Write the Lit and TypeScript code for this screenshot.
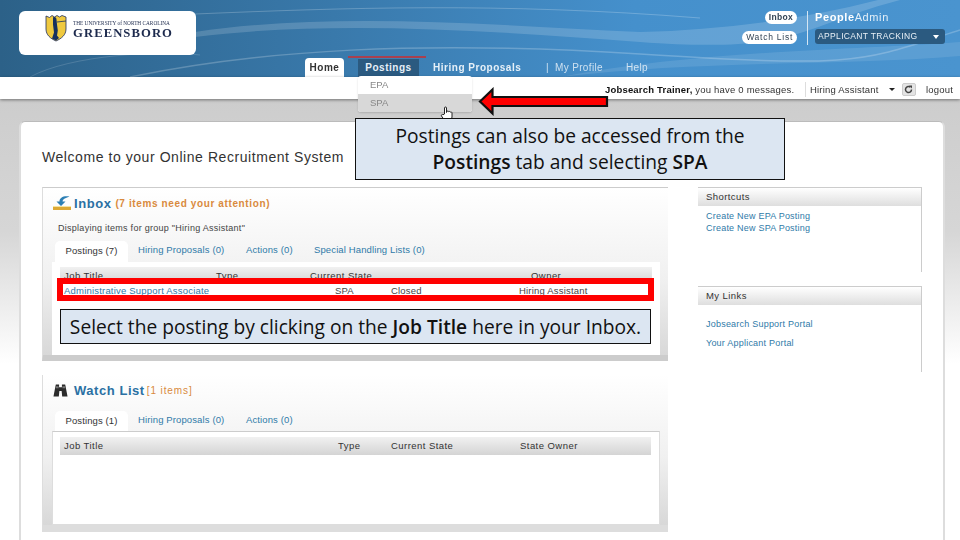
import { LitElement, html, css, svg } from "lit";
import { customElement } from "lit/decorators.js";

const inboxIcon = svg`<svg class="ico i1" width="20" height="16" viewBox="0 0 20 16"><path d="M1 11h18v4H1z" fill="#dca934"/><path d="M1 11.500h18" stroke="#f6e3a0" stroke-width="1"/><path d="M17.500 1.500C11.500.5 7.500 2.500 7.500 6.500H4.500L9 11l4.500-4.500h-3C10.500 4.500 13 3 17.500 1.500z" fill="#2c7fb4"/></svg>`;
const binoculars = svg`<svg class="ico i2" width="15" height="15" viewBox="0 0 16 15"><path d="M3 1h3.500v3H9.500V1H13l.8 4 1.700 9H9.800L9.200 8H6.800L6.200 14H.5l1.700-9z" fill="#2b2b2b"/><path d="M3 3h3v2H3zM10 3h3v2h-3z" fill="#777"/></svg>`;
const crest = svg`<svg width="22" height="27" viewBox="0 0 22 27"><path d="M1 1l3.500 1.500L7 .5 9.500 2 12 .5 14.500 2 17 .5l4 1.500v12c0 6-4.500 9.500-10 12C5.500 23.500 1 20 1 14z" fill="#efc93f" stroke="#1e2f5e" stroke-width=".8"/><path d="M8 2.500c2-1 3.500 0 3.500 2l.5 5 .8 6-.8 5 2 2.500-3 2.500-4-2 2-6-1-8z" fill="#16305f"/><path d="M12 7l9-1" stroke="#16305f" stroke-width=".8"/></svg>`;
const hand = svg`<svg width="14" height="16" viewBox="0 0 14 16"><path d="M4.500 8V2a1 1 0 0 1 2 0v4.500l.5-1a1 1 0 0 1 1.800.3 1 1 0 0 1 1.700.4 1 1 0 0 1 1.500.6V11l-1 4H5L1.500 10c-.6-1 .6-2 1.500-1.200z" fill="#fff" stroke="#222" stroke-width="1"/></svg>`;
const refresh = svg`<svg width="9" height="9" viewBox="0 0 9 9"><path d="M7.500 4.500a3 3 0 1 1-1-2.200" fill="none" stroke="#444" stroke-width="1.500"/><path d="M5 .5h3v3z" fill="#444"/></svg>`;
const swoosh = svg`<svg class="swoosh" width="960" height="77" viewBox="0 0 960 77" preserveAspectRatio="none">
<path d="M195 37C330 20 480 30 640 42S800 26 900 0h-22C800 20 720 30 640 32 480 24 330 12 195 32z" fill="#fff" opacity=".16"/>
<path d="M195 14C340 8 500 2 700 18" stroke="#fff" stroke-opacity=".22" fill="none"/>
<path d="M130 77C260 50 420 40 640 54S860 62 960 30" stroke="#fff" stroke-opacity=".22" fill="none" stroke-width="1.500"/>
<path d="M30 77C70 55 160 50 200 55" stroke="#fff" stroke-opacity=".15" fill="none"/>
<path d="M560 77C700 50 860 50 960 42v14C840 66 700 60 560 77z" fill="#fff" opacity=".1"/></svg>`;

interface Col { t: string; link?: boolean }

@customElement("app-root")
export class AppRoot extends LitElement {
  static styles = css`
    :host { display: block; position: relative; width: 960px; height: 540px; overflow: hidden; background: #fff; font-family: "Liberation Sans", Arial, sans-serif; }
    * { box-sizing: border-box; }
    .shot { display: flex; flex-direction: column; height: 540px; filter: blur(.45px); color: #333; font-size: 10px; }
    .head { position: relative; height: 77px; flex: none; background: linear-gradient(90deg, #2c6188, #3877a8 32%, #4590cc 66%, #4a94cf); display: flex; padding: 11px 15px 0 19px; }
    .swoosh { position: absolute; inset: 0; }
    .logo { position: relative; width: 177px; height: 44px; background: #fff; border-radius: 6px; display: flex; align-items: flex-start; gap: 6px; padding: 4px 0 0 26px; flex: none; }
    .logo-t { display: flex; flex-direction: column; font-family: "Liberation Serif", serif; color: #1d2a4d; padding-top: 5px; }
    .logo-s { font-size: 5.300px; line-height: 6px; white-space: nowrap; }
    .logo-b { font-size: 12.700px; font-weight: 700; letter-spacing: 1.050px; line-height: 12px; margin-top: 1px; }
    .nav { position: relative; margin-left: 109px; align-self: flex-end; display: flex; align-items: flex-end; height: 19px; font-size: 10px; font-weight: 700; letter-spacing: .52px; color: #e6f0f8; width: 360px; }
    .nav span { display: block; white-space: nowrap; }
    .t-home { width: 39px; height: 19px; background: #fff; color: #333; border-radius: 4px 4px 0 0; text-align: center; line-height: 20px; margin-right: 14px; }
    .t-post { position: relative; width: 61px; height: 18px; background: #2b5a80; text-align: center; line-height: 18px; margin-right: 14px; }
    .t-post::before { content: ""; position: absolute; left: -10px; right: -7px; top: -3px; height: 1.500px; background: #a8404f; }
    .t-hire { width: 113px; line-height: 18px; height: 18px; }
    .t-plain { font-weight: 400; opacity: .85; line-height: 18px; height: 18px; letter-spacing: .35px; }
    .t-sep { width: 9px; }
    .t-prof { width: 71px; }
    .hright { position: relative; margin-left: auto; display: flex; gap: 10px; height: 34px; }
    .pills { display: flex; flex-direction: column; align-items: flex-end; gap: 7px; }
    .pill { background: #fff; color: #345; border-radius: 7px; font-size: 8.500px; line-height: 13px; height: 13px; padding: 0 4px; letter-spacing: .75px; white-space: nowrap; }
    .pill.b { font-weight: 700; letter-spacing: .3px; }
    .vline { width: 1px; background: #d5e6f3; }
    .pa { width: 130px; margin-left: -3px; display: flex; flex-direction: column; gap: 5px; color: #e4eff8; }
    .pa-n { font-size: 11px; line-height: 13px; letter-spacing: .6px; }
    .pa-n b { color: #fff; }
    .sel { height: 15px; background: #2b5a80; border-radius: 3px; font-size: 8.500px; letter-spacing: .35px; line-height: 15px; padding: 0 3px; display: flex; justify-content: space-between; align-items: center; color: #e8f0f6; }
    .car { width: 0; height: 0; border: 3.500px solid transparent; border-top: 4px solid #fff; border-bottom: 0; margin-right: 3px; }
    .sub { height: 22px; flex: none; background: #fff; box-shadow: 0 1px 3px rgba(0,0,0,.45); position: relative; display: flex; justify-content: flex-end; align-items: center; padding: 2px 7px 0 0; font-size: 9.500px; color: #333; letter-spacing: .2px; white-space: nowrap; }
    .sub b { color: #111; }
    .msg { width: 193px; }
    .subdiv { width: 1px; height: 15px; background: #ddd; margin: 0 4px 0 7px; }
    .role { width: 79px; }
    .scar { width: 0; height: 0; border: 3.500px solid transparent; border-top: 3.500px solid #222; border-bottom: 0; margin-right: 7px; }
    .rbtn { width: 14px; height: 13px; background: #e4e4e4; border: 1px solid #ccc; border-radius: 2px; display: flex; align-items: center; justify-content: center; margin-right: 10px; }
    .body { flex: 1; min-height: 0; background: linear-gradient(180deg, #cdcdcd, #d6d6d6 30%, #fff 60%); padding: 22px 15px 0 19px; }
    .card { height: 100%; background: #fff; border-radius: 6px 6px 0 0; border-top: 1px solid #bbb; border-left: 2px solid #ddd; border-right: 2px solid #ddd; padding: 26px 0 0 21px; }
    .welcome { margin: 0 0 21px; font-size: 14px; font-weight: 400; line-height: 18px; letter-spacing: .56px; color: #333; }
    .cols { display: grid; grid-template-columns: 626px 224px; column-gap: 30px; }
    .left { display: flex; flex-direction: column; gap: 14px; }
    .panel { border-top: 1px solid #ccc; border-left: 1px solid #ddd; background: linear-gradient(180deg, #fff, #f0f0f0 55%, #d8d8d8); padding: 0 8px 0 9px; }
    .panel.inbox { height: 174px; border-bottom: 6px solid #ccc; }
    .panel.watch { height: 157px; border-bottom: 7px solid #ddd; border-top: 0; }
    .ptitle { display: flex; align-items: center; height: 30px; font-weight: 700; }
    .ico { flex: none; }
    .i1 { margin-right: 2px; }
    .i2 { margin: 0 6px 0 1px; }
    .ptitle .n { font-size: 13px; letter-spacing: .55px; color: #2a70a3; margin-right: 4px; }
    .ptitle .c { font-size: 10px; letter-spacing: .62px; color: #d98a3e; }
    .watch .ptitle .n { margin-right: 2px; }
    .watch .ptitle .c { font-weight: 400; letter-spacing: .9px; }
    .disp { font-size: 9px; letter-spacing: .27px; color: #444; line-height: 12px; padding: 4px 0 0 6px; height: 23px; }
    .tabs { display: flex; height: 21px; padding-left: 3px; font-size: 9.500px; letter-spacing: .12px; color: #2f7aa8; }
    .watch .tabs { margin-top: 6px; height: 20px; }
    .tab { padding: 0 20px 0 0; line-height: 18px; white-space: nowrap; }
    .tab.on { background: #fff; width: 73px; color: #333; text-align: center; border-radius: 5px 5px 0 0; padding: 0; margin-right: 10px; line-height: 19px; }
    .tab.a { width: 108px; } .tab.b { width: 68px; }
    .box { background: #fff; padding: 5px 8px 0 7px; height: 94px; border: 1px solid #ddd; border-top: 1px solid #ccc; }
    .inbox .box { height: 93px; border-width: 0; padding-left: 8px; }
    .thead { display: grid; height: 18px; align-items: center; background: linear-gradient(180deg, #f1f1f1, #d4d4d4); padding-left: 4px; font-size: 9.500px; letter-spacing: .45px; color: #333; white-space: nowrap; }
    .c1 { grid-template-columns: 152px 94px 221px 1fr; height: 16px; }
    .c2 { grid-template-columns: 274px 53px 129px 1fr; padding-bottom: 2px; }
    .c3 { grid-template-columns: 271px 56px 128px 1fr; letter-spacing: .2px; height: 14px; background: none; color: #444; }
    .lnk { color: #2f7aa8; }
    .side { display: flex; flex-direction: column; gap: 14px; }
    .sp { border-right: 1px solid #ccc; height: 85px; }
    .sp.m { height: 86px; }
    .sh { height: 19px; border-top: 1px solid #ccc; background: linear-gradient(180deg, #fff, #dedede); font-size: 9.500px; letter-spacing: .42px; line-height: 18px; padding-left: 8px; color: #333; }
    .sl { padding: 4px 8px; font-size: 9px; letter-spacing: .22px; color: #2f7aa8; display: flex; flex-direction: column; line-height: 12px; }
    .sp.m .sl { padding-top: 13px; gap: 7px; }
    .drop { position: absolute; left: 358px; top: 76px; width: 114px; height: 36px; border-radius: 3px; background: #fff; font-size: 9.500px; color: #888; filter: blur(.45px); box-shadow: 0 1px 2px rgba(0,0,0,.15); overflow: hidden; }
    .drop div { height: 18px; line-height: 18px; padding-left: 12px; }
    .drop .h { background: #d8d8d8; }
    .hand { position: absolute; left: 440px; top: 106px; width: 14px; height: 16px; }
    .arrow { position: absolute; left: 478px; top: 87px; width: 131px; height: 29px; }
    .call { position: absolute; background: #dce6f2; border: 1px solid #111; color: #111; font-family: "Open Sans", sans-serif; text-align: center; }
    .call b { font-weight: 600; }
    .call.one { left: 355px; top: 118px; width: 430px; height: 62px; font-size: 19.200px; line-height: 26px; padding-top: 4px; }
    .call.two { left: 60px; top: 309px; width: 591px; height: 35px; font-size: 19.200px; line-height: 33px; white-space: nowrap; }
    .redbox { position: absolute; left: 57px; top: 278px; width: 597px; height: 23px; border: 6px solid #f00; }
  `;

  private row(cls: string, cols: Col[]) {
    return html`<div class="thead ${cls}">${cols.map((c) => html`<span class=${c.link ? "lnk" : ""}>${c.t}</span>`)}</div>`;
  }

  render() {
    return html`
      <div class="shot">
        <header class="head">
          ${swoosh}
          <div class="logo">${crest}<div class="logo-t"><span class="logo-s">THE UNIVERSITY of NORTH CAROLINA</span><span class="logo-b">GREENSBORO</span></div></div>
          <nav class="nav">
            <span class="t-home">Home</span><span class="t-post">Postings</span><span class="t-hire">Hiring Proposals</span>
            <span class="t-plain t-sep">|</span><span class="t-plain t-prof">My Profile</span><span class="t-plain">Help</span>
          </nav>
          <div class="hright">
            <div class="pills"><span class="pill b">Inbox</span><span class="pill">Watch List</span></div>
            <div class="vline"></div>
            <div class="pa"><div class="pa-n"><b>People</b>Admin</div><div class="sel"><span>APPLICANT TRACKING</span><i class="car"></i></div></div>
          </div>
        </header>
        <div class="sub">
          <span class="msg"><b>Jobsearch Trainer,</b> you have 0 messages.</span><i class="subdiv"></i>
          <span class="role">Hiring Assistant</span><i class="scar"></i>
          <span class="rbtn">${refresh}</span><span>logout</span>
        </div>
        <div class="body">
          <main class="card">
            <h1 class="welcome">Welcome to your Online Recruitment System</h1>
            <div class="cols">
              <div class="left">
                <section class="panel inbox">
                  <div class="ptitle">${inboxIcon}<span class="n">Inbox</span><span class="c">(7 items need your attention)</span></div>
                  <div class="disp">Displaying items for group "Hiring Assistant"</div>
                  <div class="tabs"><span class="tab on">Postings (7)</span><span class="tab a">Hiring Proposals (0)</span><span class="tab b">Actions (0)</span><span class="tab">Special Handling Lists (0)</span></div>
                  <div class="box">
                    ${this.row("c1", [{ t: "Job Title" }, { t: "Type" }, { t: "Current State" }, { t: "Owner" }])}
                    ${this.row("c3", [{ t: "Administrative Support Associate", link: true }, { t: "SPA" }, { t: "Closed" }, { t: "Hiring Assistant" }])}
                  </div>
                </section>
                <section class="panel watch">
                  <div class="ptitle">${binoculars}<span class="n">Watch List</span><span class="c">[1 items]</span></div>
                  <div class="tabs"><span class="tab on">Postings (1)</span><span class="tab a">Hiring Proposals (0)</span><span class="tab b">Actions (0)</span></div>
                  <div class="box">
                    ${this.row("c2", [{ t: "Job Title" }, { t: "Type" }, { t: "Current State" }, { t: "State Owner" }])}
                  </div>
                </section>
              </div>
              <aside class="side">
                <section class="sp"><div class="sh">Shortcuts</div><div class="sl"><span>Create New EPA Posting</span><span>Create New SPA Posting</span></div></section>
                <section class="sp m"><div class="sh">My Links</div><div class="sl"><span>Jobsearch Support Portal</span><span>Your Applicant Portal</span></div></section>
              </aside>
            </div>
          </main>
        </div>
      </div>

      <div class="drop"><div>EPA</div><div class="h">SPA</div></div>
      <div class="hand">${hand}</div>
      <svg class="arrow" viewBox="0 0 131 29"><path d="M2 14.500L14.500 2.500V10H129V19H14.500V26.500z" fill="#f00" stroke="#111" stroke-width="2.200"/></svg>
      <div class="call one">Postings can also be accessed from the<br /><b>Postings</b> tab and selecting <b>SPA</b></div>
      <div class="redbox"></div>
      <div class="call two">Select the posting by clicking on the <b>Job Title</b> here in your Inbox.</div>
    `;
  }
}
